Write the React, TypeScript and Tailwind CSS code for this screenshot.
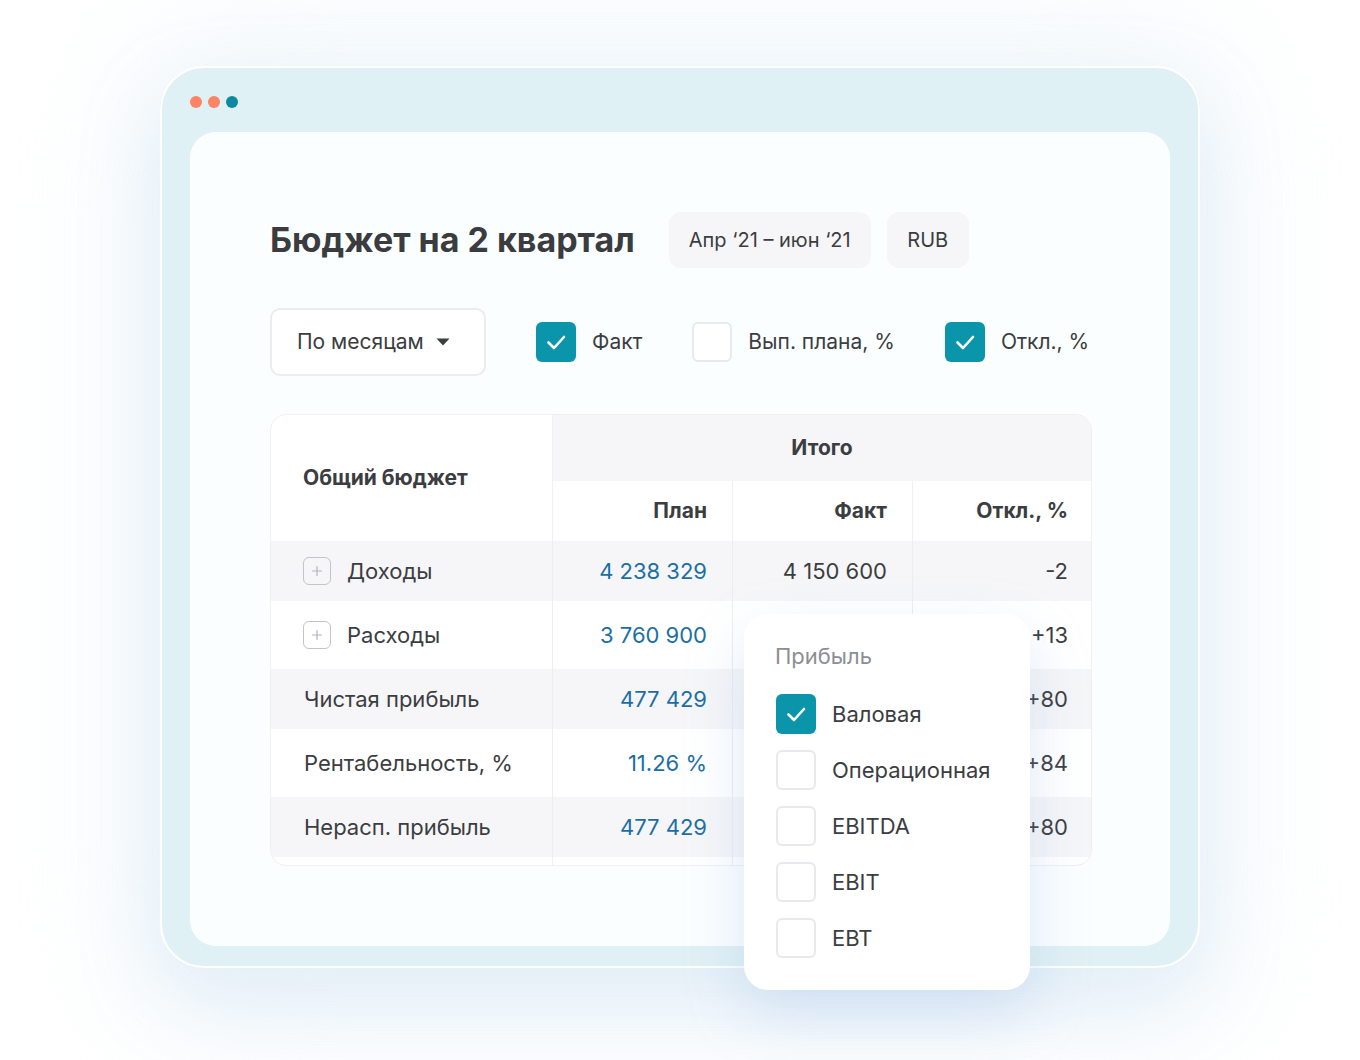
import React from 'react';

const font = { fontFamily: 'Inter, "Noto Sans", "Liberation Sans", sans-serif' };

function Check({ on }: { on?: boolean }) {
  if (on) {
    return (
      <div className="w-10 h-10 rounded-[6px] bg-[#0b95aa] flex items-center justify-center shrink-0">
        <svg width="24" height="24" viewBox="0 0 24 24" fill="none">
          <path d="M4.5 12.5l5.5 5.5L20 7" stroke="#fff" strokeWidth="2.6" strokeLinecap="round" strokeLinejoin="round" />
        </svg>
      </div>
    );
  }
  return <div className="w-10 h-10 rounded-[6px] border-2 border-[#e7e9ec] bg-white shrink-0" />;
}

function Plus() {
  return (
    <div className="w-7 h-7 rounded-[6px] border-[1.5px] border-[#c2c4c8] flex items-center justify-center shrink-0">
      <svg width="12" height="12" viewBox="0 0 12 12">
        <path d="M6 1.5v9M1.5 6h9" stroke="#b0b3b8" strokeWidth="1.2" strokeLinecap="round" />
      </svg>
    </div>
  );
}

const rows = [
  { label: 'Доходы', plus: true, plan: '4 238 329', fact: '4 150 600', dev: '-2', gray: true },
  { label: 'Расходы', plus: true, plan: '3 760 900', fact: '', dev: '+13', gray: false },
  { label: 'Чистая прибыль', plan: '477 429', fact: '', dev: '+80', gray: true },
  { label: 'Рентабельность, %', plan: '11.26 %', fact: '', dev: '+84', gray: false },
  { label: 'Нерасп. прибыль', plan: '477 429', fact: '', dev: '+80', gray: true },
];

const profit = [
  { label: 'Валовая', on: true },
  { label: 'Операционная' },
  { label: 'EBITDA' },
  { label: 'EBIT' },
  { label: 'EBT' },
];

export default function App() {
  return (
    <div className="relative w-full h-[1060px] bg-white overflow-hidden text-[#3b3d41]" style={font}>
      <div className="absolute left-[120px] top-[20px] w-[1120px] h-[1020px] rounded-[120px] bg-[#eef6fb] blur-[60px] opacity-70" />
      <div className="relative pt-[66px] pl-[160px]">
        <div className="w-[1040px] h-[902px] rounded-[44px] bg-[#e0f1f5] border-2 border-white shadow-[0_30px_80px_rgba(170,205,230,0.25)] px-[28px]">
          <div className="flex gap-[6px] pt-[28px] pb-[24px]">
            <span className="w-3 h-3 rounded-full bg-[#fd8465]" />
            <span className="w-3 h-3 rounded-full bg-[#fd8465]" />
            <span className="w-3 h-3 rounded-full bg-[#0e8aa0]" />
          </div>
          <div className="w-[980px] h-[814px] rounded-[26px] bg-[#fbfeff] pt-[80px] pl-[80px]">
            <div className="flex items-center h-14">
              <h1 className="text-[34px] font-bold leading-10 text-[#3a3c40]">Бюджет на 2 квартал</h1>
              <div className="ml-[34px] h-14 w-[202px] rounded-xl bg-[#f6f6f8] flex items-center justify-center text-[20px]">Апр ‘21 – июн ‘21</div>
              <div className="ml-4 h-14 w-[82px] rounded-xl bg-[#f6f6f8] flex items-center justify-center text-[20px]">RUB</div>
            </div>

            <div className="flex items-center mt-10 h-[68px] text-[21px]">
              <div className="w-[216px] h-[68px] rounded-[10px] border-2 border-[#ececef] bg-white flex items-center pl-[25px]">
                По месяцам
                <svg className="ml-3" width="14" height="8" viewBox="0 0 14 8">
                  <path d="M0.5 0.5h13L7 7.5z" fill="#3b3d41" />
                </svg>
              </div>
              <div className="ml-[50px] flex items-center gap-4">
                <Check on />
                <span>Факт</span>
              </div>
              <div className="ml-[50px] flex items-center gap-4">
                <Check />
                <span>Вып. плана, %</span>
              </div>
              <div className="ml-[50px] flex items-center gap-4">
                <Check on />
                <span>Откл., %</span>
              </div>
            </div>

            <div className="mt-[38px] w-[822px] rounded-2xl border border-[#eff0f2] bg-white overflow-hidden pb-2 text-[22px]">
              <div className="grid grid-cols-[282px_180px_180px_1fr]">
                <div className="row-span-2 flex items-center pl-8 text-[21px] font-bold border-r border-[#eff0f2]">Общий бюджет</div>
                <div className="col-span-3 h-[66px] bg-[#f6f6f8] flex items-center justify-center text-[21px] font-bold">Итого</div>
                <div className="h-[60px] flex items-center justify-end pr-[25px] text-[21px] font-bold border-r border-[#eff0f2]">План</div>
                <div className="h-[60px] flex items-center justify-end pr-[25px] text-[21px] font-bold border-r border-[#eff0f2]">Факт</div>
                <div className="h-[60px] flex items-center justify-end pr-[23px] text-[21px] font-bold">Откл., %</div>

                {rows.map((r) => {
                  const bg = r.gray ? 'bg-[#f6f6f8] h-[60px]' : 'bg-white h-[68px]';
                  return (
                    <React.Fragment key={r.label}>
                      <div className={`${bg} flex items-center border-r border-[#eceef1] ${r.plus ? 'pl-8 gap-4' : 'pl-[33px]'}`}>
                        {r.plus && <Plus />}
                        <span>{r.label}</span>
                      </div>
                      <div className={`${bg} flex items-center justify-end pr-[25px] text-[#1b6fa6] border-r border-[#eceef1]`}>{r.plan}</div>
                      <div className={`${bg} flex items-center justify-end pr-[25px] border-r border-[#eceef1]`}>{r.fact}</div>
                      <div className={`${bg} flex items-center justify-end pr-[23px]`}>{r.dev}</div>
                    </React.Fragment>
                  );
                })}
                <div className="border-r border-[#eff0f2] h-2 -mb-2" />
                <div className="border-r border-[#eff0f2] h-2 -mb-2" />
                <div className="border-r border-[#eff0f2] h-2 -mb-2" />
              </div>
            </div>
          </div>
        </div>
      </div>

      <div className="absolute left-[744px] top-[614px] w-[286px] h-[376px] rounded-[24px] bg-white shadow-[0_24px_60px_rgba(140,175,225,0.28)] pl-8 pt-[28px] text-[22px]">
        <div className="text-[#8b8e94] leading-7 -ml-px">Прибыль</div>
        <div className="mt-[24px] flex flex-col gap-4">
          {profit.map((p) => (
            <div key={p.label} className="flex items-center gap-4">
              <Check on={p.on} />
              <span>{p.label}</span>
            </div>
          ))}
        </div>
      </div>
    </div>
  );
}
